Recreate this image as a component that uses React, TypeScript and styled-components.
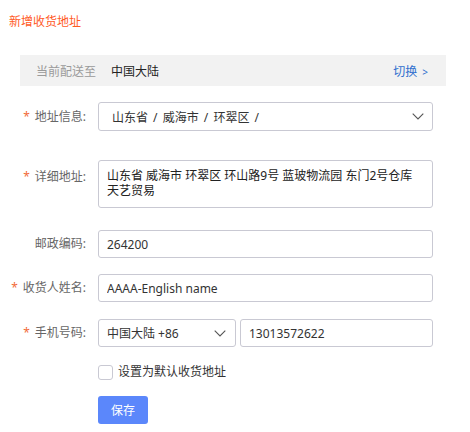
import styled, { createGlobalStyle } from "styled-components";

const GlobalStyle = createGlobalStyle`
  body {
    margin: 0;
    background: #fff;
    font-family: "Noto Sans", "Noto Sans CJK SC", sans-serif;
    font-size: 12px;
    color: #333;
  }
`;

const Chevron = () => (
  <svg width="12" height="7" viewBox="0 0 12 7" fill="none">
    <path d="M0.7 0.7 L6 6 L11.3 0.7" stroke="#555" strokeWidth="1.1" />
  </svg>
);

export default function App() {
  return (
    <>
      <GlobalStyle />
      <Page>
        <Title>新增收货地址</Title>
        <Body>
          <DeliveryBar>
            <DeliveryLabel>当前配送至</DeliveryLabel>
            <DeliveryValue>中国大陆</DeliveryValue>
            <SwitchLink>
              切换 <small>&gt;</small>
            </SwitchLink>
          </DeliveryBar>

          <Form>
            <Row $gap={29}>
              <Label>
                <Star>*</Star>地址信息:
              </Label>
              <SelectBox $height={29}>
                <RegionText>山东省 / 威海市 / 环翠区 /</RegionText>
                <Chevron />
              </SelectBox>
            </Row>

            <Row $gap={22} $top>
              <Label $top>
                <Star>*</Star>详细地址:
              </Label>
              <TextArea
                defaultValue="山东省 威海市 环翠区 环山路9号 蓝玻物流园 东门2号仓库 天艺贸易"
              />
            </Row>

            <Row $gap={16}>
              <Label>邮政编码:</Label>
              <Input defaultValue="264200" />
            </Row>

            <Row $gap={17}>
              <Label>
                <Star>*</Star>收货人姓名:
              </Label>
              <Input defaultValue="AAAA-English name" />
            </Row>

            <Row $gap={17}>
              <Label>
                <Star>*</Star>手机号码:
              </Label>
              <PhoneGroup>
                <SelectBox $height={28} $compact>
                  <span>中国大陆 +86</span>
                  <Chevron />
                </SelectBox>
                <Input defaultValue="13013572622" />
              </PhoneGroup>
            </Row>

            <Row $gap={16}>
              <span />
              <CheckLine>
                <CheckBox />
                设置为默认收货地址
              </CheckLine>
            </Row>

            <Row $gap={0}>
              <span />
              <div>
                <SaveButton>保存</SaveButton>
              </div>
            </Row>
          </Form>
        </Body>
      </Page>
    </>
  );
}

const Page = styled.div`
  width: 470px;
  padding-top: 12px;
`;

const Title = styled.div`
  padding-left: 9px;
  line-height: 20px;
  font-size: 12px;
  color: #ff5a1f;
`;

const Body = styled.div`
  padding: 0 24px 0 20px;
  margin-top: 23px;
`;

const DeliveryBar = styled.div`
  display: flex;
  align-items: center;
  height: 31px;
  padding: 0 18px 0 16px;
  background: #f2f2f2;
`;

const DeliveryLabel = styled.span`
  color: #9a9a9a;
  width: 75px;
`;

const DeliveryValue = styled.span`
  color: #222;
  flex: 1;
`;

const SwitchLink = styled.a`
  color: #2f6fce;
  cursor: pointer;
  small {
    font-size: 10px;
    margin-left: 2px;
  }
`;

const Form = styled.div`
  margin-top: 16px;
  padding-right: 13px;
`;

const Row = styled.div<{ $gap: number; $top?: boolean }>`
  display: grid;
  grid-template-columns: 66px 1fr;
  column-gap: 12px;
  align-items: ${(p) => (p.$top ? "start" : "center")};
  margin-bottom: ${(p) => p.$gap}px;
`;

const Label = styled.label<{ $top?: boolean }>`
  justify-self: end;
  white-space: nowrap;
  color: #666;
  line-height: 16px;
  padding-top: ${(p) => (p.$top ? "9px" : "0")};
`;

const Star = styled.span`
  color: #f26b3a;
  margin-right: 5px;
`;

const fieldBorder = "#c9c9d3";

const SelectBox = styled.div<{ $height: number; $compact?: boolean }>`
  box-sizing: border-box;
  height: ${(p) => p.$height}px;
  display: flex;
  align-items: center;
  justify-content: space-between;
  padding: ${(p) => (p.$compact ? "0 9px 0 8px" : "0 8px 0 13px")};
  border: 1px solid ${fieldBorder};
  border-radius: 3px;
  color: #333;
`;

const RegionText = styled.span`
  word-spacing: 2px;
`;

const TextArea = styled.textarea`
  box-sizing: border-box;
  height: 48px;
  width: 100%;
  padding: 7px 10px 0 8px;
  border: 1px solid ${fieldBorder};
  border-radius: 3px;
  font-family: inherit;
  font-size: 12px;
  line-height: 15px;
  color: #222;
  resize: none;
  outline: none;
`;

const Input = styled.input`
  box-sizing: border-box;
  height: 28px;
  width: 100%;
  padding: 0 8px;
  border: 1px solid ${fieldBorder};
  border-radius: 3px;
  font-family: inherit;
  font-size: 12px;
  color: #333;
  outline: none;
`;

const PhoneGroup = styled.div`
  display: grid;
  grid-template-columns: 138px 1fr;
  column-gap: 4px;
`;

const CheckLine = styled.label`
  display: flex;
  align-items: center;
  gap: 5px;
  color: #333;
  line-height: 16px;
`;

const CheckBox = styled.span`
  box-sizing: border-box;
  width: 15px;
  height: 15px;
  border: 1px solid ${fieldBorder};
  border-radius: 3px;
  background: #fff;
`;

const SaveButton = styled.button`
  width: 50px;
  height: 28px;
  border: none;
  border-radius: 3px;
  background: #5b87fb;
  color: #fff;
  font-family: inherit;
  font-size: 12px;
  cursor: pointer;
`;
